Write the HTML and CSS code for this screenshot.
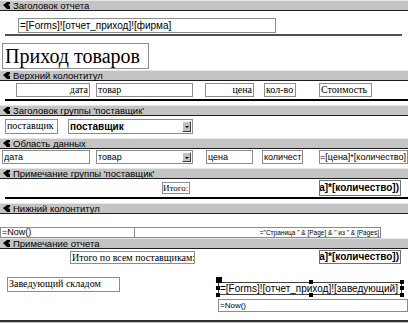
FILE: index.html
```html
<!DOCTYPE html>
<html lang="ru">
<head>
    <meta charset="UTF-8">
    <title>Приход товаров</title>
    <link rel="stylesheet" href="styles.css">
</head>
<body>
    <div class="bar"><svg class="ico" width="7" height="7" viewBox="0 0 7 7"><path d="M0 3 L4 0 L7 0 L7 2 L5 3 L7 4 L7 7 L4 7 Z"/></svg>Заголовок отчета</div>
    <div class="sec s1">
        <div class="box firma">=[Forms]![отчет_приход]![фирма]</div>
        <div class="line l1"></div>
        <div class="box serif title">Приход товаров</div>
    </div>

    <div class="bar"><svg class="ico" width="7" height="7" viewBox="0 0 7 7"><path d="M0 3 L4 0 L7 0 L7 2 L5 3 L7 4 L7 7 L4 7 Z"/></svg>Верхний колонтитул</div>
    <div class="sec s2">
        <div class="row hdr">
            <div class="box serif right w-data">дата</div>
            <div class="box serif w-tovar">товар</div>
            <div class="box serif right w-cena">цена</div>
            <div class="box serif w-kol">кол-во</div>
            <div class="box serif w-st">Стоимость</div>
        </div>
        <div class="line l2"></div>
    </div>

    <div class="bar"><svg class="ico" width="7" height="7" viewBox="0 0 7 7"><path d="M0 3 L4 0 L7 0 L7 2 L5 3 L7 4 L7 7 L4 7 Z"/></svg>Заголовок группы 'поставщик'</div>
    <div class="sec s3">
        <div class="row grp">
            <div class="box serif lbl-post">поставщик</div>
            <div class="box combo bold">поставщик<span class="drop"></span></div>
        </div>
    </div>

    <div class="bar"><svg class="ico" width="7" height="7" viewBox="0 0 7 7"><path d="M0 3 L4 0 L7 0 L7 2 L5 3 L7 4 L7 7 L4 7 Z"/></svg>Область данных</div>
    <div class="sec s4">
        <div class="row dat">
            <div class="box d-data">дата</div>
            <div class="box combo">товар<span class="drop"></span></div>
            <div class="box d-cena">цена</div>
            <div class="box d-kol">количество</div>
            <div class="box endclip d-sum"><span>=[цена]*[количество]</span></div>
        </div>
    </div>

    <div class="bar"><svg class="ico" width="7" height="7" viewBox="0 0 7 7"><path d="M0 3 L4 0 L7 0 L7 2 L5 3 L7 4 L7 7 L4 7 Z"/></svg>Примечание группы 'поставщик'</div>
    <div class="sec s5">
        <div class="row gsum">
            <div class="box serif itogo">Итого:</div>
            <div class="box endclip bold total">=Sum([цена]*[количество])</div>
        </div>
        <div class="line l5"></div>
    </div>

    <div class="bar"><svg class="ico" width="7" height="7" viewBox="0 0 7 7"><path d="M0 3 L4 0 L7 0 L7 2 L5 3 L7 4 L7 7 L4 7 Z"/></svg>Нижний колонтитул</div>
    <div class="sec s6">
        <div class="row foot">
            <div class="box now1">=Now()</div>
            <div class="box right pages">="Страница " &amp; [Page] &amp; " из " &amp; [Pages]</div>
        </div>
    </div>

    <div class="bar"><svg class="ico" width="7" height="7" viewBox="0 0 7 7"><path d="M0 3 L4 0 L7 0 L7 2 L5 3 L7 4 L7 7 L4 7 Z"/></svg>Примечание отчета</div>
    <div class="sec s7">
        <div class="row rsum">
            <div class="box serif itogo-all">Итого по всем поставщикам:</div>
            <div class="box endclip bold total">=Sum([цена]*[количество])</div>
        </div>
        <div class="row sign">
            <div class="box serif zav">Заведующий складом</div>
            <div class="box sel">=[Forms]![отчет_приход]![заведующий]
                <i class="h big tl"></i><i class="h tm"></i><i class="h tr"></i>
                <i class="h ml"></i><i class="h mr"></i>
                <i class="h bl"></i><i class="h bm"></i><i class="h br"></i>
            </div>
        </div>
        <div class="row now-row">
            <div class="box now2">=Now()</div>
        </div>
    </div>
    <div class="edge"></div>
</body>
</html>
```

FILE: styles.css
```css
*{
    margin: 0;
    padding: 0;
    box-sizing: border-box;
}

body{
    width: 408px;
    height: 323px;
    overflow: hidden;
    background: #c0c0c0;
    font-family: "Liberation Sans", Arial, sans-serif;
    font-size: 10px;
    color: #000;
}

/* section bars */
.bar{
    height: 11px;
    background: #c4c4c4;
    border-top: 1px solid #e6e6e6;
    border-bottom: 1px solid #1e1e1e;
    display: flex;
    align-items: center;
    padding-left: 3px;
    font-size: 9.5px;
    line-height: 9px;
    white-space: nowrap;
}
.ico{
    margin-right: 3px;
    fill: #000;
}

.sec{
    background: #fff;
}
.s1{ height: 59px; padding-top: 7px; }
.s2{ height: 24px; padding-top: 2px; }
.s3{ height: 22px; padding-top: 3px; }
.s4{ height: 19px; padding-top: 1px; }
.s5{ height: 24px; padding-top: 1px; }
.s6{ height: 24px; padding-top: 13px; }
.s7{ height: 71px; padding-top: 1px; }

.row{
    display: flex;
    align-items: flex-start;
}

/* controls */
.box{
    flex: none;
    border: 1px solid #8c8c8c;
    height: 14px;
    line-height: 12px;
    padding: 0 1px;
    white-space: nowrap;
    overflow: hidden;
    background: #fff;
}
.serif{
    font-family: "Liberation Serif", "Times New Roman", serif;
}
.right{
    text-align: right;
}
.bold{
    font-weight: bold;
}
.endclip{
    display: flex;
    justify-content: flex-end;
}

.line{
    background: #2a2a2a;
    height: 2px;
}

/* report header */
.firma{
    margin-left: 18px;
    width: 258px;
    height: 15px;
    line-height: 13px;
}
.l1{
    margin: 1px 0 0 5px;
    width: 397px;
    background: #505050;
}
.title{
    margin: 7px 0 0 2px;
    width: 147px;
    height: 26px;
    font-size: 20px;
    line-height: 24px;
    padding-left: 2px;
}

/* page header */
.hdr .box{ margin-left: 10px; }
.hdr .w-data{ margin-left: 16px; width: 74px; }
.hdr .w-tovar{ margin-left: 6px; width: 97px; }
.hdr .w-cena{ margin-left: 12px; width: 49px; }
.hdr .w-kol{ width: 32px; }
.hdr .w-st{ margin-left: 23px; width: 53px; }
.l2{
    margin: 2px 0 0 5px;
    width: 403px;
    background: #000;
}

/* group header */
.lbl-post{
    margin-left: 5px;
    width: 53px;
    height: 15px;
}
.combo{
    position: relative;
    margin-left: 6px;
    width: 97px;
    height: 14px;
}
.grp .combo{
    margin-left: 10px;
    width: 125px;
    height: 15px;
    line-height: 13px;
}
.drop{
    position: absolute;
    right: 1px;
    top: 1px;
    width: 9px;
    bottom: 1px;
    background: #c0c0c0;
    border-top: 1px solid #fff;
    border-left: 1px solid #fff;
    border-right: 1px solid #404040;
    border-bottom: 1px solid #404040;
}
.drop::after{
    content: "";
    position: absolute;
    left: 2px;
    top: 4px;
    border-left: 2px solid transparent;
    border-right: 2px solid transparent;
    border-top: 2px solid #000;
}

/* detail */
.dat .box{ font-size: 9px; }
.d-data{ margin-left: 2px; width: 88px; }
.d-cena{ margin-left: 13px; width: 47px; }
.d-kol{ margin-left: 9px; width: 41px; }
.d-sum{ margin-left: 16px; width: 89px; }

/* group footer */
.itogo{
    margin: 2px 0 0 162px;
    width: 28px;
    height: 12px;
    line-height: 10px;
    font-size: 9px;
    padding: 0;
}
.total{
    margin-left: 129px;
    width: 82px;
    height: 16px;
    line-height: 14px;
    border-color: #707070;
}
.l5{
    margin: 1px 0 0 5px;
    width: 403px;
    background: #000;
}

/* page footer */
.now1{
    width: 135px;
    height: 11px;
    line-height: 9px;
    font-size: 9px;
}
.pages{
    width: 246px;
    height: 11px;
    line-height: 9px;
    font-size: 6.5px;
    border-left: none;
}

/* report footer */
.itogo-all{
    margin: 1px 0 0 70px;
    width: 125px;
    height: 13px;
    line-height: 11px;
}
.rsum .total{
    margin-left: 124px;
    height: 14px;
    line-height: 12px;
}
.sign{
    margin-top: 13px;
}
.zav{
    margin-left: 7px;
    width: 113px;
    height: 15px;
}
.sel{
    position: relative;
    overflow: visible;
    margin: 5px 0 0 98px;
    width: 184px;
    height: 13px;
    line-height: 11px;
    border-color: #404040;
}
.h{
    position: absolute;
    width: 4px;
    height: 4px;
    background: #000;
}
.h.big{ width: 6px; height: 6px; }
.tl{ left: -3px; top: -6px; }
.tm{ left: 90px; top: -3px; }
.tr{ right: -3px; top: -3px; }
.ml{ left: -3px; top: 3px; }
.mr{ right: -3px; top: 3px; }
.bl{ left: -3px; bottom: -3px; }
.bm{ left: 90px; bottom: -3px; }
.br{ right: -3px; bottom: -3px; }

.now-row{
    margin-top: 4px;
}
.now2{
    margin-left: 218px;
    width: 190px;
    height: 13px;
    line-height: 11px;
    font-size: 8px;
}

.edge{
    height: 2px;
    background: #303030;
}
```
